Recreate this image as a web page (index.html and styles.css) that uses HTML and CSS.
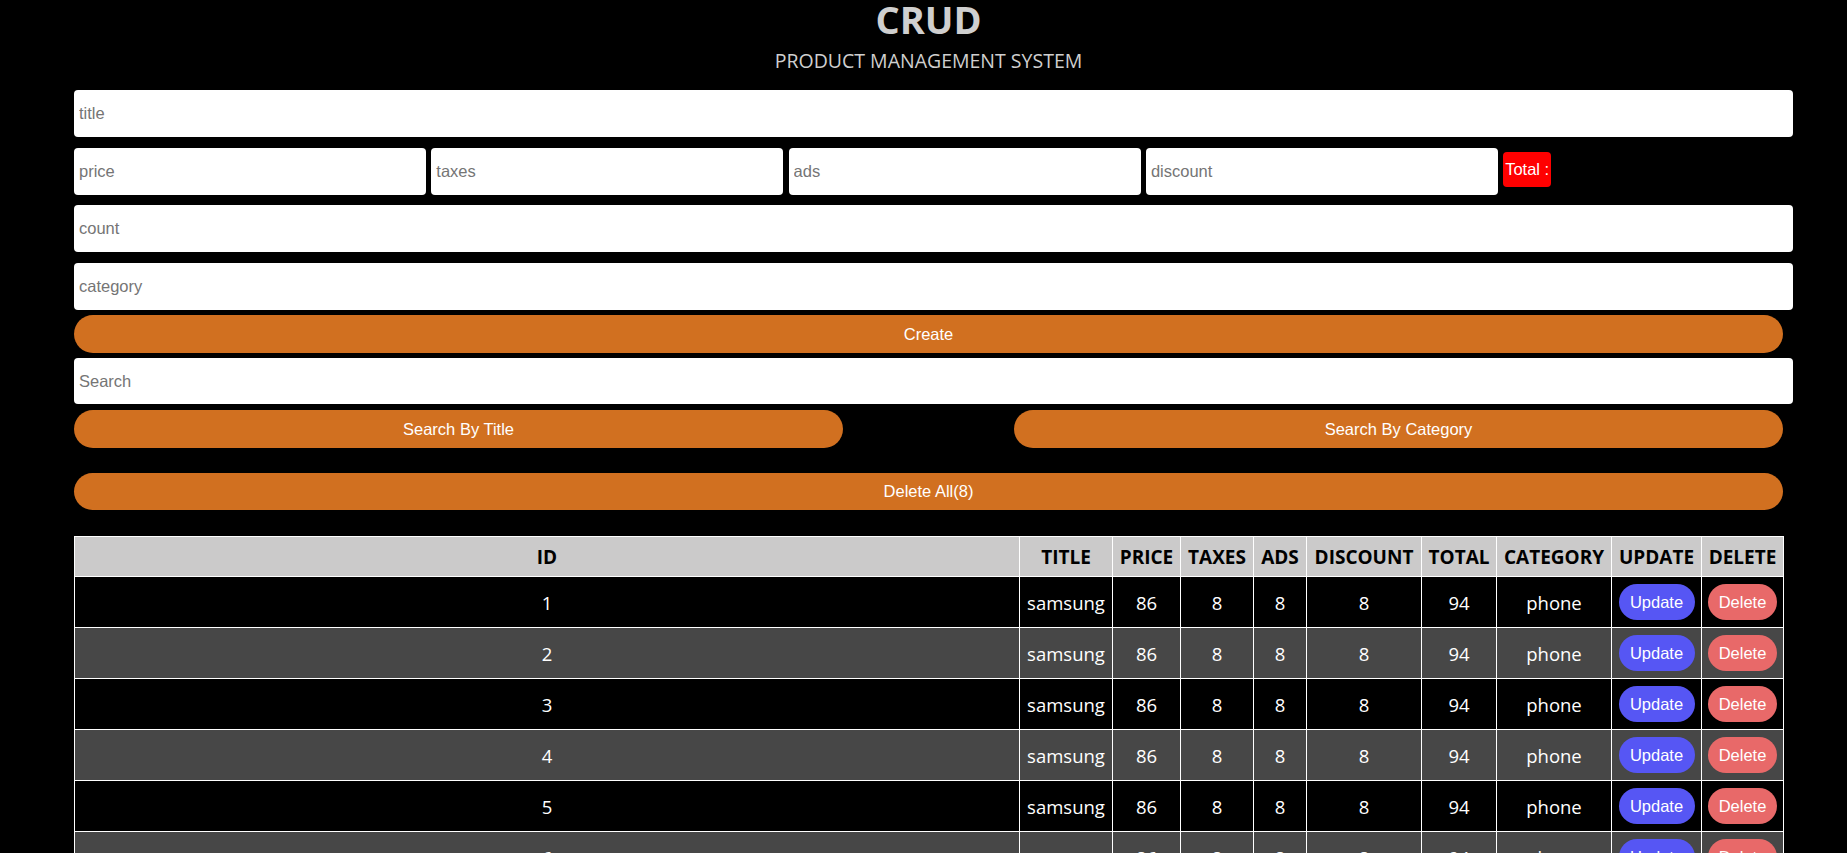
FILE: index.html
```html
<!DOCTYPE html>
<html lang="en">
<head>
<meta charset="utf-8">
<title>CRUD</title>
<link rel="stylesheet" href="styles.css">
</head>
<body>
<div class="crud">
  <div class="head">
    <h1 class="brand">CRUD</h1>
    <p class="subtitle">PRODUCT MANAGEMENT SYSTEM</p>
  </div>
  <div class="inputs">
    <input class="field field-title" type="text" placeholder="title">
    <div class="price-row">
      <input class="field field-price" type="number" placeholder="price">
      <input class="field field-price" type="number" placeholder="taxes">
      <input class="field field-price" type="number" placeholder="ads">
      <input class="field field-price" type="number" placeholder="discount">
      <small class="total">Total :</small>
    </div>
    <input class="field field-count" type="number" placeholder="count">
    <input class="field field-category" type="text" placeholder="category">
    <button class="btn btn-create">Create</button>
  </div>
  <div class="search-block">
    <input class="field field-search" type="text" placeholder="Search">
    <div class="search-buttons">
      <button class="btn btn-half">Search By Title</button>
      <button class="btn btn-half">Search By Category</button>
    </div>
  </div>
  <div class="delete-all">
    <button class="btn">Delete All(8)</button>
  </div>
  <table class="products">
    <colgroup>
      <col class="c-id"><col class="c-title"><col class="c-price"><col class="c-taxes"><col class="c-ads"><col class="c-discount"><col class="c-total"><col class="c-category"><col class="c-update"><col class="c-delete">
    </colgroup>
    <thead>
      <tr><th>ID</th><th>TITLE</th><th>PRICE</th><th>TAXES</th><th>ADS</th><th>DISCOUNT</th><th>TOTAL</th><th>CATEGORY</th><th>UPDATE</th><th>DELETE</th></tr>
    </thead>
    <tbody>
      <tr><td>1</td><td>samsung</td><td>86</td><td>8</td><td>8</td><td>8</td><td>94</td><td>phone</td><td><button class="pill pill-update">Update</button></td><td><button class="pill pill-delete">Delete</button></td></tr>
      <tr><td>2</td><td>samsung</td><td>86</td><td>8</td><td>8</td><td>8</td><td>94</td><td>phone</td><td><button class="pill pill-update">Update</button></td><td><button class="pill pill-delete">Delete</button></td></tr>
      <tr><td>3</td><td>samsung</td><td>86</td><td>8</td><td>8</td><td>8</td><td>94</td><td>phone</td><td><button class="pill pill-update">Update</button></td><td><button class="pill pill-delete">Delete</button></td></tr>
      <tr><td>4</td><td>samsung</td><td>86</td><td>8</td><td>8</td><td>8</td><td>94</td><td>phone</td><td><button class="pill pill-update">Update</button></td><td><button class="pill pill-delete">Delete</button></td></tr>
      <tr><td>5</td><td>samsung</td><td>86</td><td>8</td><td>8</td><td>8</td><td>94</td><td>phone</td><td><button class="pill pill-update">Update</button></td><td><button class="pill pill-delete">Delete</button></td></tr>
      <tr><td>6</td><td>samsung</td><td>86</td><td>8</td><td>8</td><td>8</td><td>94</td><td>phone</td><td><button class="pill pill-update">Update</button></td><td><button class="pill pill-delete">Delete</button></td></tr>
      <tr><td>7</td><td>samsung</td><td>86</td><td>8</td><td>8</td><td>8</td><td>94</td><td>phone</td><td><button class="pill pill-update">Update</button></td><td><button class="pill pill-delete">Delete</button></td></tr>
      <tr><td>8</td><td>samsung</td><td>86</td><td>8</td><td>8</td><td>8</td><td>94</td><td>phone</td><td><button class="pill pill-update">Update</button></td><td><button class="pill pill-delete">Delete</button></td></tr>
    </tbody>
  </table>
</div>
</body>
</html>
```
FILE: styles.css
```css
* { box-sizing: border-box; }

html, body {
  margin: 0;
  padding: 0;
  background: #000;
}

body {
  font-family: "Open Sans", "Noto Sans", sans-serif;
  color: #fff;
  overflow: hidden;
}

.crud {
  width: 1709px;
  margin: 0 0 0 74px;
}

.head {
  text-align: center;
  color: #cfcfcf;
}

.brand {
  margin: 0;
  font-size: 38px;
  line-height: 38px;
  font-weight: 700;
}

.subtitle {
  margin: 13px 0 0;
  font-size: 19.5px;
  line-height: 20px;
  font-weight: 400;
}

.inputs {
  margin-top: 19px;
  display: flex;
  flex-direction: column;
}

.field {
  display: block;
  height: 47px;
  border: none;
  outline: none;
  border-radius: 4px;
  background: #fff;
  padding: 0 5px;
  font-family: "Liberation Sans", Arial, sans-serif;
  font-size: 16.5px;
  color: #222;
}

.field::placeholder { color: #757575; }

.field-title,
.field-count,
.field-category,
.field-search {
  width: calc(100% + 10px);
}

.field-title { margin-bottom: 11px; }
.field-count { margin-bottom: 11px; }
.field-category { margin-bottom: 5px; }

.price-row {
  display: flex;
  align-items: center;
  gap: 5.3px;
  margin-bottom: 10px;
}

.field-price {
  width: 352px;
  flex: none;
}

.total {
  display: block;
  background: #ff0000;
  color: #fff;
  border-radius: 4px;
  height: 35px;
  width: 48px;
  line-height: 35px;
  text-align: center;
  font-family: "Liberation Sans", Arial, sans-serif;
  font-size: 16.5px;
  margin-top: -4px;
  white-space: nowrap;
}

.btn {
  display: block;
  width: 100%;
  height: 38px;
  border: none;
  border-radius: 19px;
  background: #d17020;
  color: #fff;
  font-family: "Liberation Sans", Arial, sans-serif;
  font-size: 16.5px;
  cursor: pointer;
  padding: 0;
}

.btn-create { margin-bottom: 5px; }

.field-search { margin-bottom: 6px; height: 46px; }

.search-buttons {
  display: flex;
  justify-content: space-between;
}

.btn-half { width: 769px; }

.delete-all {
  margin-top: 25px;
}

.delete-all .btn { height: 37px; border-radius: 18.5px; }

.products {
  margin-top: 26px;
  width: 1709px;
  table-layout: fixed;
  border-collapse: collapse;
  text-align: center;
}

.c-id { width: 945px; }
.c-title { width: 93px; }
.c-price { width: 68px; }
.c-taxes { width: 73px; }
.c-ads { width: 53px; }
.c-discount { width: 115px; }
.c-total { width: 75px; }
.c-category { width: 115px; }
.c-update { width: 90px; }
.c-delete { width: 82px; }

.products th,
.products td {
  border: 1px solid #fff;
  padding: 0;
  white-space: nowrap;
}

.products th {
  background: #cbcaca;
  color: #000;
  height: 40px;
  font-size: 19px;
  font-weight: 700;
}

.products td {
  height: 51px;
  font-size: 18.5px;
  color: #fff;
}

.products tbody tr:nth-child(odd) td { background: #000; }
.products tbody tr:nth-child(even) td { background: #474747; }

.pill {
  display: inline-block;
  height: 36px;
  border: none;
  border-radius: 18px;
  color: #fff;
  font-family: "Liberation Sans", Arial, sans-serif;
  font-size: 16.5px;
  padding: 0;
  vertical-align: middle;
  cursor: pointer;
}

.pill-update { width: 76px; background: #5656f4; }
.pill-delete { width: 69px; background: #e86969; }
```
